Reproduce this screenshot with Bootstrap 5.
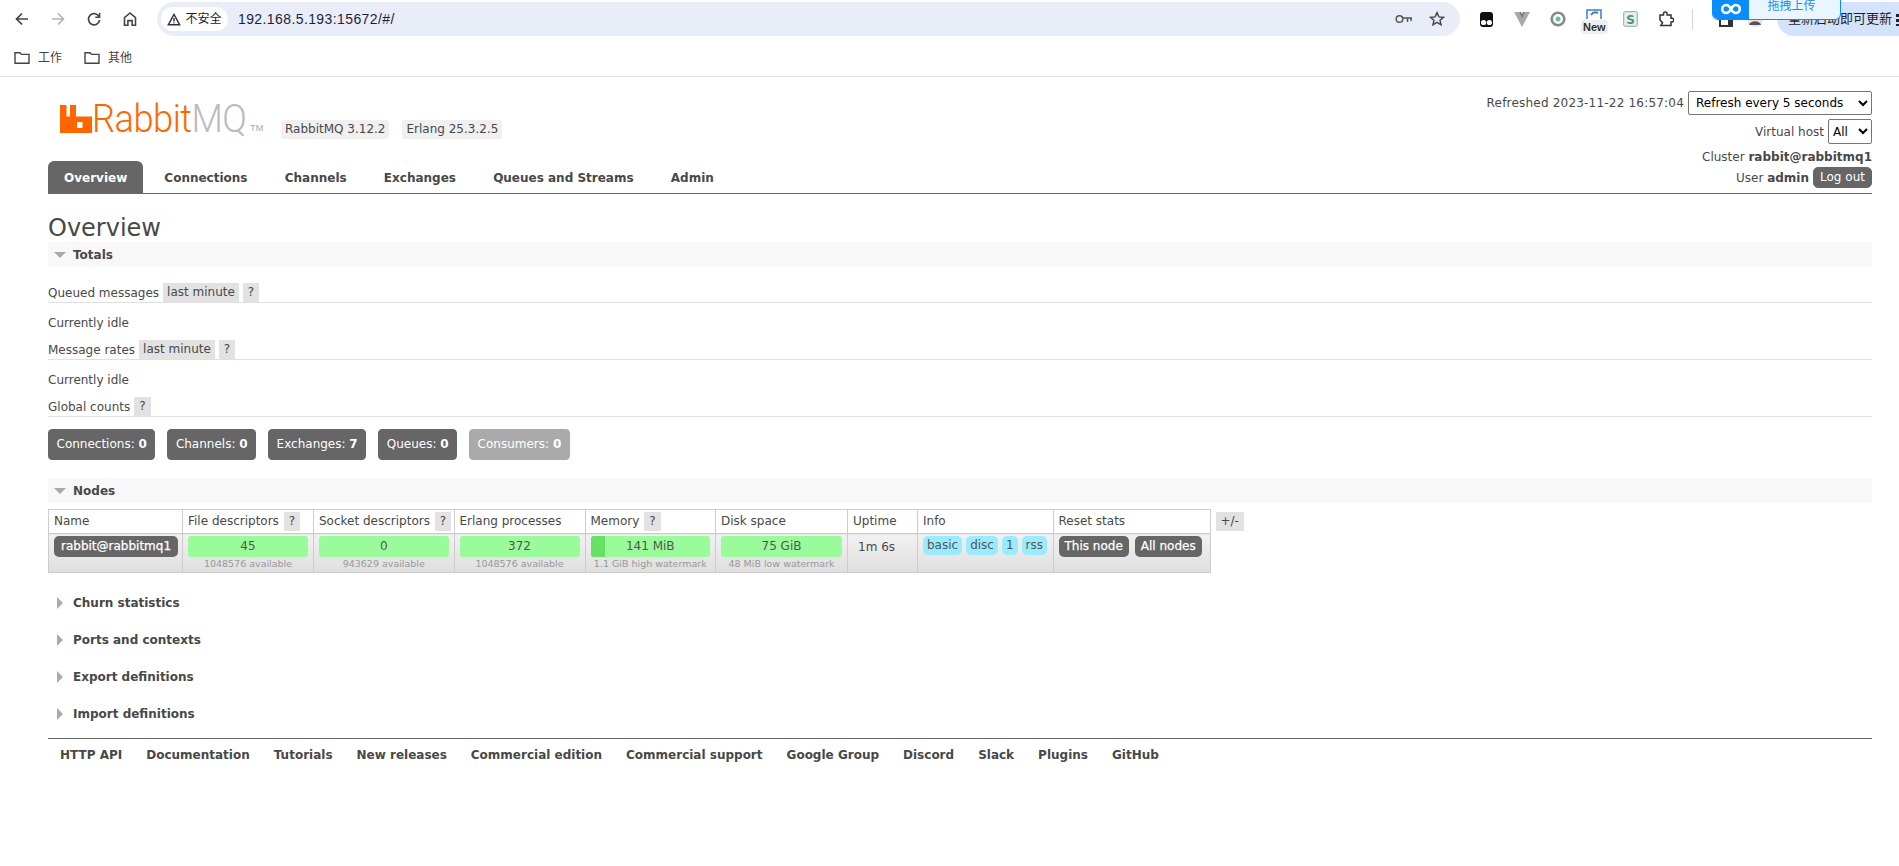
<!DOCTYPE html>
<html lang="en">
<head>
    <meta charset="UTF-8">
    <meta name="viewport" content="width=device-width, initial-scale=1.0">
    <title>RabbitMQ Management</title>
    <link href="https://cdn.jsdelivr.net/npm/bootstrap@5.3.0/dist/css/bootstrap.min.css" rel="stylesheet">
    <style>
        body { font-family: "DejaVu Sans", sans-serif; font-size: 12px; color: #484848; background: #fff; overflow: hidden; }

        /* browser chrome */
        .chrome { height: 77px; border-bottom: 1px solid #e3e3e3; position: relative; overflow: hidden; font-family: "Liberation Sans", "Noto Sans CJK SC", sans-serif; }
        .chrome-bar { height: 37px; padding-top: 1px; }
        .tool-btn { width: 36px; height: 36px; flex: none; }
        .tool-first { margin-left: 4px; }
        .omni { width: 1303px; height: 34px; margin-left: 9px; border-radius: 17px; background: #e9edf7; padding: 0 11px 0 4px; flex: none; }
        .omni-chip { width: 67px; height: 24px; border-radius: 12px; background: #fff; font-size: 12px; color: #202124; }
        .omni-url { font-size: 14px; color: #1f1f3a; margin-left: 10px; letter-spacing: .4px; font-family: "Liberation Sans", sans-serif; }
        .ext-row { margin-left: 8px; }
        .ext-icon { width: 36px; height: 36px; position: relative; flex: none; }
        .ext-tight { margin-left: -7px; }
        .ext-new { position: absolute; left: 5px; top: 19px; background: #efefef; border-radius: 3px; font-size: 11px; font-weight: 700; line-height: 14px; padding: 0 2px; color: #333; }
        .ext-sep { width: 1px; height: 20px; background: #c9d7f2; margin: 0 15px 0 8px; flex: none; }
        .update-pill { position: absolute; left: 1777px; top: 2px; width: 140px; height: 34px; background: #d3e3fd; border-radius: 17px 0 0 17px; padding-left: 11px; font-size: 13px; line-height: 34px; color: #1f1f1f; white-space: nowrap; }
        .update-dots { position: absolute; left: 1896px; top: 13px; width: 3px; height: 13px; background: radial-gradient(circle, #222 1.5px, transparent 1.6px) 0 0 / 3px 5px; }
        .upload-tip { position: absolute; left: 1712px; top: -2px; width: 129px; height: 22px; border: 1px solid #0a8cff; border-radius: 0 0 6px 6px; background: #e9f6ff; z-index: 2; overflow: hidden; display: flex; }
        .upload-logo { width: 36px; background: #0a8cff; display: flex; align-items: center; justify-content: center; }
        .upload-text { flex: 1; text-align: center; font-size: 12px; line-height: 14px; color: #1a8cf0; padding-right: 6px; }
        .bm-bar { height: 37px; margin-top: 2px; padding-left: 14px; gap: 22px; }
        .bm-item { gap: 8px; font-size: 12px; color: #444; }

        /* rabbitmq header */
        .rmq-page { margin: 0 27px 0 48px; }
        .rmq-head { height: 117px; border-bottom: 1px solid #666; position: relative; }
        .logo-row { height: 84px; padding: 28px 0 0 12px; }
        .logo-group { width: 221px; height: 28px; flex: none; }
        .logo-mark { flex: none; }
        .logo-text { font-family: "Roboto", "Liberation Sans", sans-serif; font-weight: 300; font-size: 39px; line-height: 28px; height: 28px; width: 152px; color: #ff6600; letter-spacing: -.55px; transform: scaleX(.93); transform-origin: left center; white-space: nowrap; flex: none; }
        .logo-text span { color: #bbb; }
        .logo-tm { font-size: 9px; color: #aaa; align-self: flex-end; margin-left: 6px; letter-spacing: .3px; font-family: "Liberation Sans", sans-serif; line-height: 9px; }
        .ver-tag { background: #f0f0f0; border-radius: 3px; padding: 0 4px; height: 19px; line-height: 19px; margin-top: 15px; }
        .ver-tag + .ver-tag { margin-left: 13px; }
        .rmq-tabs .nav-link { font-weight: 700; color: #484848; padding: 0 18.6px; height: 32px; line-height: 34px; border-radius: 6px 6px 0 0; font-size: 12px; }
        .rmq-tabs .nav-link.active { background: #666; color: #fff; padding: 0 16px; margin-right: 2.5px; }
        .rmq-status { position: absolute; right: 0; top: 14px; text-align: right; }
        .refreshed-text { letter-spacing: .2px; }
        .status-line { height: 21px; gap: 4px; }
        .cluster-line { margin-top: 2px; }
        .rmq-select { height: 24px; border: 1px solid #767676; border-radius: 2px; background: #fff; color: #000; font-size: 12px; font-family: "DejaVu Sans", sans-serif; }
        .sel-refresh { width: 184px; padding-left: 3px; }
        .sel-vhost { width: 44px; height: 25px; }
        .logout-btn { --bs-btn-padding-y: 0; --bs-btn-padding-x: 6px; --bs-btn-font-size: 12px; --bs-btn-bg: #666; --bs-btn-color: #fff; --bs-btn-border-color: #666; --bs-btn-border-radius: 5px; height: 21px; width: 59px; line-height: 19px; }

        h1.rmq-title { font-size: 24px; font-weight: 400; line-height: 28px; margin: 20px 0 0; color: #484848; }
        .sec-bar { background: #f8f8f8; height: 25px; font-weight: 700; font-size: 12px; padding-left: 6px; }
        .sec-open-arrow { width: 0; height: 0; border-left: 6px solid transparent; border-right: 6px solid transparent; border-top: 6px solid #aaa; margin-right: 7px; }
        .sec-closed-arrow { width: 0; height: 0; border-top: 6px solid transparent; border-bottom: 6px solid transparent; border-left: 6px solid #aaa; margin: 0 10px 0 1px; }
        .sec-closed { height: 25px; font-weight: 700; padding-left: 8px; margin-bottom: 12px; }
        .sub-head { height: 20px; border-bottom: 1px solid #e0e0e0; gap: 4px; }
        .sub-btn { background: #e2e2e2; padding: 0 4px; height: 19px; line-height: 19px; color: #484848; }
        .help-btn { padding: 0 5px; }
        .idle-text { height: 37px; line-height: 40px; }
        .stat-row { gap: 12px; margin: 12px 0 18px; }
        .stat-btn { --bs-btn-padding-y: 0; --bs-btn-padding-x: 7.5px; --bs-btn-font-size: 12px; --bs-btn-bg: #666; --bs-btn-color: #fff; --bs-btn-border-color: #666; --bs-btn-border-radius: 4px; height: 31px; line-height: 29px; }
        .stat-btn.stat-off { --bs-btn-bg: #aaa; --bs-btn-border-color: #aaa; }

        /* nodes table */
        .nodes-wrap { margin: 6px 0 17px; gap: 5px; }
        .nodes-table { table-layout: fixed; width: 1162px; border-collapse: collapse; flex: none; }
        .nodes-table th, .nodes-table td { border: 1px solid #ccc; font-weight: 400; padding: 0 5px; vertical-align: top; }
        .nodes-table thead th { height: 24px; line-height: 22px; background: #fff; white-space: nowrap; }
        .nodes-table tbody td { height: 39px; background: linear-gradient(#f2f2f2, #dfdfdf); padding-top: 2px; }
        .nodes-table col:nth-child(1) { width: 134px; }
        .nodes-table col:nth-child(2) { width: 131px; }
        .nodes-table col:nth-child(3) { width: 140.5px; }
        .nodes-table col:nth-child(4) { width: 131px; }
        .nodes-table col:nth-child(5) { width: 130.5px; }
        .nodes-table col:nth-child(6) { width: 132px; }
        .nodes-table col:nth-child(7) { width: 70px; }
        .nodes-table col:nth-child(8) { width: 135.5px; }
        .nodes-table col:nth-child(9) { width: 157px; }
        .head-help { background: #e2e2e2; padding: 0 5px; display: inline-block; height: 19px; line-height: 19px; margin-left: 1px; vertical-align: top; margin-top: 2px; }
        .node-name { background: #666; color: #fff; border-radius: 5px; height: 21px; line-height: 21px; padding: 0 7px; display: inline-block; white-space: nowrap; -webkit-text-stroke: .25px #fff; }
        .meter { height: 21px; line-height: 21px; background: #99fb99; border-radius: 3px; text-align: center; position: relative; overflow: hidden; color: #555; }
        .meter-fill { position: absolute; left: 0; top: 0; bottom: 0; background: #66e166; }
        .meter-val { position: relative; }
        .meter-sub { font-size: 9.5px; color: #999; line-height: 13px; text-align: center; white-space: nowrap; }
        .info-row { gap: 4px; }
        .info-tag { background: #99ebff; border-radius: 5px; height: 19px; line-height: 19px; padding: 0 4px; color: #555; white-space: nowrap; }
        .uptime-text { padding: 2px 0 0 5px; }
        .reset-row { gap: 6px; }
        .reset-btn { background: #666; color: #fff; border-radius: 5px; height: 21px; line-height: 21px; padding: 0 6px; white-space: nowrap; -webkit-text-stroke: .25px #fff; }
        .plus-minus { background: #e2e2e2; height: 19px; line-height: 19px; padding: 0 5px; margin-top: 3px; }

        .rmq-foot { border-top: 1px solid #666; padding-left: 12px; gap: 24px; height: 32px; font-weight: 700; }
    </style>
</head>
<body>
    <!-- Browser toolbar -->
    <div class="chrome">
        <div class="chrome-bar d-flex align-items-center">
            <div class="tool-btn tool-first d-flex align-items-center justify-content-center">
                <svg width="16" height="16" viewBox="0 0 16 16" fill="none" stroke="#444" stroke-width="1.7"><path d="M14 8H2.500M8 2.500 2.500 8 8 13.500"/></svg>
            </div>
            <div class="tool-btn d-flex align-items-center justify-content-center">
                <svg width="16" height="16" viewBox="0 0 16 16" fill="none" stroke="#b5b5b5" stroke-width="1.7"><path d="M2 8h11.500M8 2.500 13.500 8 8 13.500"/></svg>
            </div>
            <div class="tool-btn d-flex align-items-center justify-content-center">
                <svg width="16" height="16" viewBox="0 0 16 16" fill="none" stroke="#444" stroke-width="1.7"><path d="M13.200 6A5.600 5.600 0 1 0 13.600 9"/><path d="M13.600 2v4.300H9.300" stroke-width="1.500"/></svg>
            </div>
            <div class="tool-btn d-flex align-items-center justify-content-center">
                <svg width="16" height="16" viewBox="0 0 16 16" fill="none" stroke="#444" stroke-width="1.600"><path d="M2.500 14.200V6.600L8 2l5.500 4.600v7.600h-3.400V9.600H5.900v4.600z"/></svg>
            </div>
            <div class="omni d-flex align-items-center">
                <div class="omni-chip d-flex align-items-center justify-content-center gap-1">
                    <svg width="14" height="13" viewBox="0 0 14 13" fill="none" stroke="#333" stroke-width="1.400"><path d="M7 1.400 1.300 11.800h11.400z"/><path d="M7 5v3.500M7 9.400v1.200"/></svg>
                    <span>不安全</span>
                </div>
                <span class="omni-url">192.168.5.193:15672/#/</span>
                <div class="ms-auto d-flex align-items-center gap-3 pe-1">
                    <svg width="18" height="10" viewBox="0 0 18 10" fill="none" stroke="#555" stroke-width="1.500"><circle cx="4.500" cy="5" r="3.300"/><path d="M8 4h9M12.500 4v4M16 4v3"/></svg>
                    <svg width="16" height="16" viewBox="0 0 16 16" fill="none" stroke="#444" stroke-width="1.400"><path d="M8 1.600 9.900 5.900l4.600.4-3.500 3 1.100 4.500L8 11.400l-4.100 2.400L5 9.300l-3.500-3 4.600-.4z"/></svg>
                </div>
            </div>
            <div class="ext-row d-flex align-items-center">
                <div class="ext-icon d-flex align-items-center justify-content-center">
                    <svg width="15" height="15" viewBox="0 0 15 15"><rect x="1" y="0" width="13" height="15" rx="3" fill="#111"/><circle cx="4.600" cy="10.500" r="2.600" fill="#fff"/><circle cx="10.400" cy="10.500" r="2.600" fill="#fff"/></svg>
                </div>
                <div class="ext-icon d-flex align-items-center justify-content-center">
                    <svg width="16" height="15" viewBox="0 0 16 15"><path d="M0 0h5l3 5 3-5h5L8 15z" fill="#aaa"/><path d="M5 0h2l1 2 1-2h2L8 6z" fill="#777"/></svg>
                </div>
                <div class="ext-icon d-flex align-items-center justify-content-center">
                    <svg width="16" height="16" viewBox="0 0 16 16" fill="none"><circle cx="8" cy="8" r="6.300" stroke="#888" stroke-width="2.600"/><circle cx="8" cy="8" r="2.500" fill="#5cc4a8"/></svg>
                </div>
                <div class="ext-icon d-flex justify-content-center">
                    <svg class="mt-2" width="16" height="12" viewBox="0 0 16 12" fill="none"><path d="M1 10V1h14v9" stroke="#3f7fc0" stroke-width="1.500"/><path d="M5 6c2-3 5-3 7-2" stroke="#3f7fc0" stroke-width="2"/></svg>
                    <span class="ext-new">New</span>
                </div>
                <div class="ext-icon d-flex align-items-center justify-content-center">
                    <svg width="15" height="16" viewBox="0 0 15 16"><rect x=".7" y=".7" width="13.600" height="14.600" rx="1.500" fill="#e4f1ec" stroke="#8aa" stroke-width="1"/><text x="7.500" y="12.500" text-anchor="middle" font-size="12" font-weight="700" fill="#5a8a80" font-family="DejaVu Sans">S</text></svg>
                </div>
                <div class="ext-icon d-flex align-items-center justify-content-center">
                    <svg width="16" height="16" viewBox="0 0 16 16" fill="none" stroke="#333" stroke-width="1.500"><path d="M2 4h3.500V2.800a1.800 1.800 0 0 1 3.600 0V4H13v3.300h1a1.800 1.800 0 0 1 0 3.600h-1V14.500H2.800l1.700-2.800L2 9z"/></svg>
                </div>
                <div class="ext-sep"></div>
                <div class="ext-icon d-flex align-items-center justify-content-center">
                    <svg width="14" height="15" viewBox="0 0 14 15"><rect width="14" height="15" y="1" rx="1" fill="#333"/><rect x="2" y="3" width="7" height="10" fill="#fff"/></svg>
                </div>
                <div class="ext-icon ext-tight d-flex align-items-center justify-content-center">
                    <svg width="16" height="16" viewBox="0 0 16 16"><circle cx="8" cy="8" r="8" fill="#e6e6e6"/><circle cx="8" cy="6" r="3" fill="#555"/><path d="M2 14c1-5 11-5 12 0z" fill="#555"/></svg>
                </div>
            </div>
        </div>
        <div class="update-pill">重新启动即可更新</div>
        <div class="update-dots"></div>
        <div class="upload-tip">
            <div class="upload-logo">
                <svg width="20" height="12" viewBox="0 0 20 12" fill="none" stroke="#fff" stroke-width="2.600"><path d="M10 6C8.500 3 7 2 5.200 2a3.900 3.900 0 0 0 0 8C7 10 8.500 9 10 6s3-4 4.800-4a3.900 3.900 0 0 1 0 8C13 10 11.500 9 10 6z"/></svg>
            </div>
            <div class="upload-text">拖拽上传</div>
        </div>
        <div class="bm-bar d-flex align-items-center">
            <div class="bm-item d-flex align-items-center">
                <svg width="16" height="13" viewBox="0 0 16 13" fill="none" stroke="#444" stroke-width="1.400"><path d="M1 1.700h5l1.500 1.700H15v8.900H1z"/></svg>
                <span>工作</span>
            </div>
            <div class="bm-item d-flex align-items-center">
                <svg width="16" height="13" viewBox="0 0 16 13" fill="none" stroke="#444" stroke-width="1.400"><path d="M1 1.700h5l1.500 1.700H15v8.900H1z"/></svg>
                <span>其他</span>
            </div>
        </div>
    </div>

    <div class="rmq-page">
        <!-- Header -->
        <div class="rmq-head">
            <div class="logo-row d-flex align-items-start">
                <div class="logo-group d-flex">
                    <svg class="logo-mark" width="32" height="28" viewBox="0 0 32 28"><path fill="#ff6600" fill-rule="evenodd" d="M0 0h6.500v11.500h3.500V0h6v11.500h16V28H0zM17 17v6h5.500v-6z"/></svg>
                    <div class="logo-text">Rabbit<span>MQ</span></div>
                    <div class="logo-tm">TM</div>
                </div>
                <div class="ver-tag">RabbitMQ 3.12.2</div>
                <div class="ver-tag">Erlang 25.3.2.5</div>
            </div>
            <ul class="nav rmq-tabs">
                <li class="nav-item"><a class="nav-link active" href="#">Overview</a></li>
                <li class="nav-item"><a class="nav-link" href="#">Connections</a></li>
                <li class="nav-item"><a class="nav-link" href="#">Channels</a></li>
                <li class="nav-item"><a class="nav-link" href="#">Exchanges</a></li>
                <li class="nav-item"><a class="nav-link" href="#">Queues and Streams</a></li>
                <li class="nav-item"><a class="nav-link" href="#">Admin</a></li>
            </ul>
            <div class="rmq-status">
                <div class="d-flex align-items-center justify-content-end gap-1 mb-1">
                    <span class="refreshed-text">Refreshed 2023-11-22 16:57:04</span>
                    <select class="rmq-select sel-refresh"><option>Refresh every 5 seconds</option></select>
                </div>
                <div class="d-flex align-items-center justify-content-end gap-1">
                    <span>Virtual host</span>
                    <select class="rmq-select sel-vhost"><option>All</option></select>
                </div>
                <div class="status-line cluster-line d-flex align-items-center justify-content-end">
                    <span>Cluster <b>rabbit@rabbitmq1</b></span>
                </div>
                <div class="status-line d-flex align-items-center justify-content-end">
                    <span>User <b>admin</b></span>
                    <button class="btn logout-btn" type="button">Log out</button>
                </div>
            </div>
        </div>

        <h1 class="rmq-title">Overview</h1>

        <!-- Totals -->
        <div class="sec-bar d-flex align-items-center"><span class="sec-open-arrow"></span>Totals</div>
        <div class="sub-head d-flex align-items-center mt-3">
            <span>Queued messages</span><span class="sub-btn">last minute</span><span class="sub-btn help-btn">?</span>
        </div>
        <div class="idle-text">Currently idle</div>
        <div class="sub-head d-flex align-items-center">
            <span>Message rates</span><span class="sub-btn">last minute</span><span class="sub-btn help-btn">?</span>
        </div>
        <div class="idle-text">Currently idle</div>
        <div class="sub-head d-flex align-items-center">
            <span>Global counts</span><span class="sub-btn help-btn">?</span>
        </div>
        <div class="stat-row d-flex">
            <button class="btn stat-btn" type="button">Connections: <b>0</b></button>
            <button class="btn stat-btn" type="button">Channels: <b>0</b></button>
            <button class="btn stat-btn" type="button">Exchanges: <b>7</b></button>
            <button class="btn stat-btn" type="button">Queues: <b>0</b></button>
            <button class="btn stat-btn stat-off" type="button">Consumers: <b>0</b></button>
        </div>

        <!-- Nodes -->
        <div class="sec-bar d-flex align-items-center"><span class="sec-open-arrow"></span>Nodes</div>
        <div class="nodes-wrap d-flex align-items-start">
            <table class="nodes-table">
                <colgroup><col><col><col><col><col><col><col><col><col></colgroup>
                <thead>
                    <tr>
                        <th>Name</th>
                        <th>File descriptors <span class="head-help">?</span></th>
                        <th>Socket descriptors <span class="head-help">?</span></th>
                        <th>Erlang processes</th>
                        <th>Memory <span class="head-help">?</span></th>
                        <th>Disk space</th>
                        <th>Uptime</th>
                        <th>Info</th>
                        <th>Reset stats</th>
                    </tr>
                </thead>
                <tbody>
                    <tr>
                        <td><span class="node-name">rabbit@rabbitmq1</span></td>
                        <td><div class="meter">45</div><div class="meter-sub">1048576 available</div></td>
                        <td><div class="meter">0</div><div class="meter-sub">943629 available</div></td>
                        <td><div class="meter">372</div><div class="meter-sub">1048576 available</div></td>
                        <td>
                            <div class="meter"><div class="meter-fill" style="width: 12%"></div><span class="meter-val">141 MiB</span></div>
                            <div class="meter-sub">1.1 GiB high watermark</div>
                        </td>
                        <td><div class="meter">75 GiB</div><div class="meter-sub">48 MiB low watermark</div></td>
                        <td><div class="uptime-text">1m 6s</div></td>
                        <td><div class="info-row d-flex"><span class="info-tag">basic</span><span class="info-tag">disc</span><span class="info-tag">1</span><span class="info-tag">rss</span></div></td>
                        <td><div class="reset-row d-flex"><span class="reset-btn">This node</span><span class="reset-btn">All nodes</span></div></td>
                    </tr>
                </tbody>
            </table>
            <span class="plus-minus">+/-</span>
        </div>

        <!-- Collapsed sections -->
        <div class="sec-closed d-flex align-items-center"><span class="sec-closed-arrow"></span>Churn statistics</div>
        <div class="sec-closed d-flex align-items-center"><span class="sec-closed-arrow"></span>Ports and contexts</div>
        <div class="sec-closed d-flex align-items-center"><span class="sec-closed-arrow"></span>Export definitions</div>
        <div class="sec-closed d-flex align-items-center"><span class="sec-closed-arrow"></span>Import definitions</div>

        <!-- Footer -->
        <div class="rmq-foot d-flex align-items-center">
            <span>HTTP API</span>
            <span>Documentation</span>
            <span>Tutorials</span>
            <span>New releases</span>
            <span>Commercial edition</span>
            <span>Commercial support</span>
            <span>Google Group</span>
            <span>Discord</span>
            <span>Slack</span>
            <span>Plugins</span>
            <span>GitHub</span>
        </div>
    </div>

    <script src="https://cdn.jsdelivr.net/npm/bootstrap@5.3.0/dist/js/bootstrap.bundle.min.js"></script>
</body>
</html>
